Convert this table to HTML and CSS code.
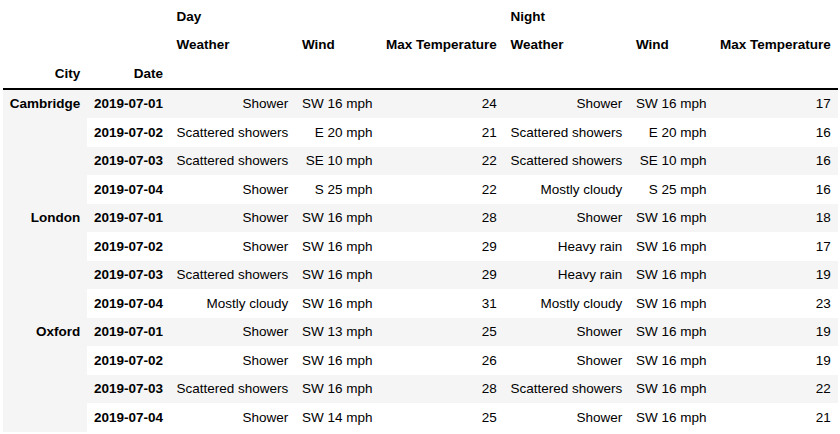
FILE: index.html
```html
<!DOCTYPE html>
<html>
<head>
<meta charset="utf-8">
<link rel="stylesheet" href="styles.css">
</head>
<body>
<div class="wrap">
<table class="df">
  <thead>
    <tr>
      <th class="blank"></th>
      <th class="blank"></th>
      <th class="col" colspan="3">Day</th>
      <th class="col" colspan="3">Night</th>
    </tr>
    <tr>
      <th class="blank"></th>
      <th class="blank"></th>
      <th class="col">Weather</th>
      <th class="col">Wind</th>
      <th class="col">Max Temperature</th>
      <th class="col">Weather</th>
      <th class="col">Wind</th>
      <th class="col">Max Temperature</th>
    </tr>
    <tr class="names">
      <th class="idxname">City</th>
      <th class="idxname">Date</th>
      <th></th><th></th><th></th><th></th><th></th><th></th>
    </tr>
  </thead>
  <tbody>
    <tr><th class="city" rowspan="4">Cambridge</th><th>2019-07-01</th><td>Shower</td><td>SW 16 mph</td><td>24</td><td>Shower</td><td>SW 16 mph</td><td>17</td></tr>
    <tr><th>2019-07-02</th><td>Scattered showers</td><td>E 20 mph</td><td>21</td><td>Scattered showers</td><td>E 20 mph</td><td>16</td></tr>
    <tr><th>2019-07-03</th><td>Scattered showers</td><td>SE 10 mph</td><td>22</td><td>Scattered showers</td><td>SE 10 mph</td><td>16</td></tr>
    <tr><th>2019-07-04</th><td>Shower</td><td>S 25 mph</td><td>22</td><td>Mostly cloudy</td><td>S 25 mph</td><td>16</td></tr>
    <tr><th class="city" rowspan="4">London</th><th>2019-07-01</th><td>Shower</td><td>SW 16 mph</td><td>28</td><td>Shower</td><td>SW 16 mph</td><td>18</td></tr>
    <tr><th>2019-07-02</th><td>Shower</td><td>SW 16 mph</td><td>29</td><td>Heavy rain</td><td>SW 16 mph</td><td>17</td></tr>
    <tr><th>2019-07-03</th><td>Scattered showers</td><td>SW 16 mph</td><td>29</td><td>Heavy rain</td><td>SW 16 mph</td><td>19</td></tr>
    <tr><th>2019-07-04</th><td>Mostly cloudy</td><td>SW 16 mph</td><td>31</td><td>Mostly cloudy</td><td>SW 16 mph</td><td>23</td></tr>
    <tr><th class="city" rowspan="4">Oxford</th><th>2019-07-01</th><td>Shower</td><td>SW 13 mph</td><td>25</td><td>Shower</td><td>SW 16 mph</td><td>19</td></tr>
    <tr><th>2019-07-02</th><td>Shower</td><td>SW 16 mph</td><td>26</td><td>Shower</td><td>SW 16 mph</td><td>19</td></tr>
    <tr><th>2019-07-03</th><td>Scattered showers</td><td>SW 16 mph</td><td>28</td><td>Scattered showers</td><td>SW 16 mph</td><td>22</td></tr>
    <tr><th>2019-07-04</th><td>Shower</td><td>SW 14 mph</td><td>25</td><td>Shower</td><td>SW 16 mph</td><td>21</td></tr>
  </tbody>
</table>
</div>
</body>
</html>
```

FILE: styles.css
```css
html, body {
  margin: 0;
  padding: 0;
  background: #ffffff;
}
.wrap {
  padding: 2px 3px 0 3px;
}
.df {
  border-collapse: collapse;
  border: none;
  border-spacing: 0;
  font-family: "Liberation Sans", Arial, sans-serif;
  font-size: 13.5px;
  color: #000000;
  table-layout: auto;
}
.df th, .df td {
  padding: 6.67px 6.8px;
  line-height: 15.2px;
  white-space: nowrap;
  text-align: right;
  vertical-align: middle;
  border: none;
}
.df th {
  font-weight: bold;
}
.df thead {
  border-bottom: 2px solid #000000;
}
.df thead th.col {
  text-align: left;
}
.df thead th.idxname {
  text-align: right;
}
.df tbody tr:nth-child(odd) {
  background: #f5f5f5;
}
.df tbody th.city {
  vertical-align: top;
}
```
